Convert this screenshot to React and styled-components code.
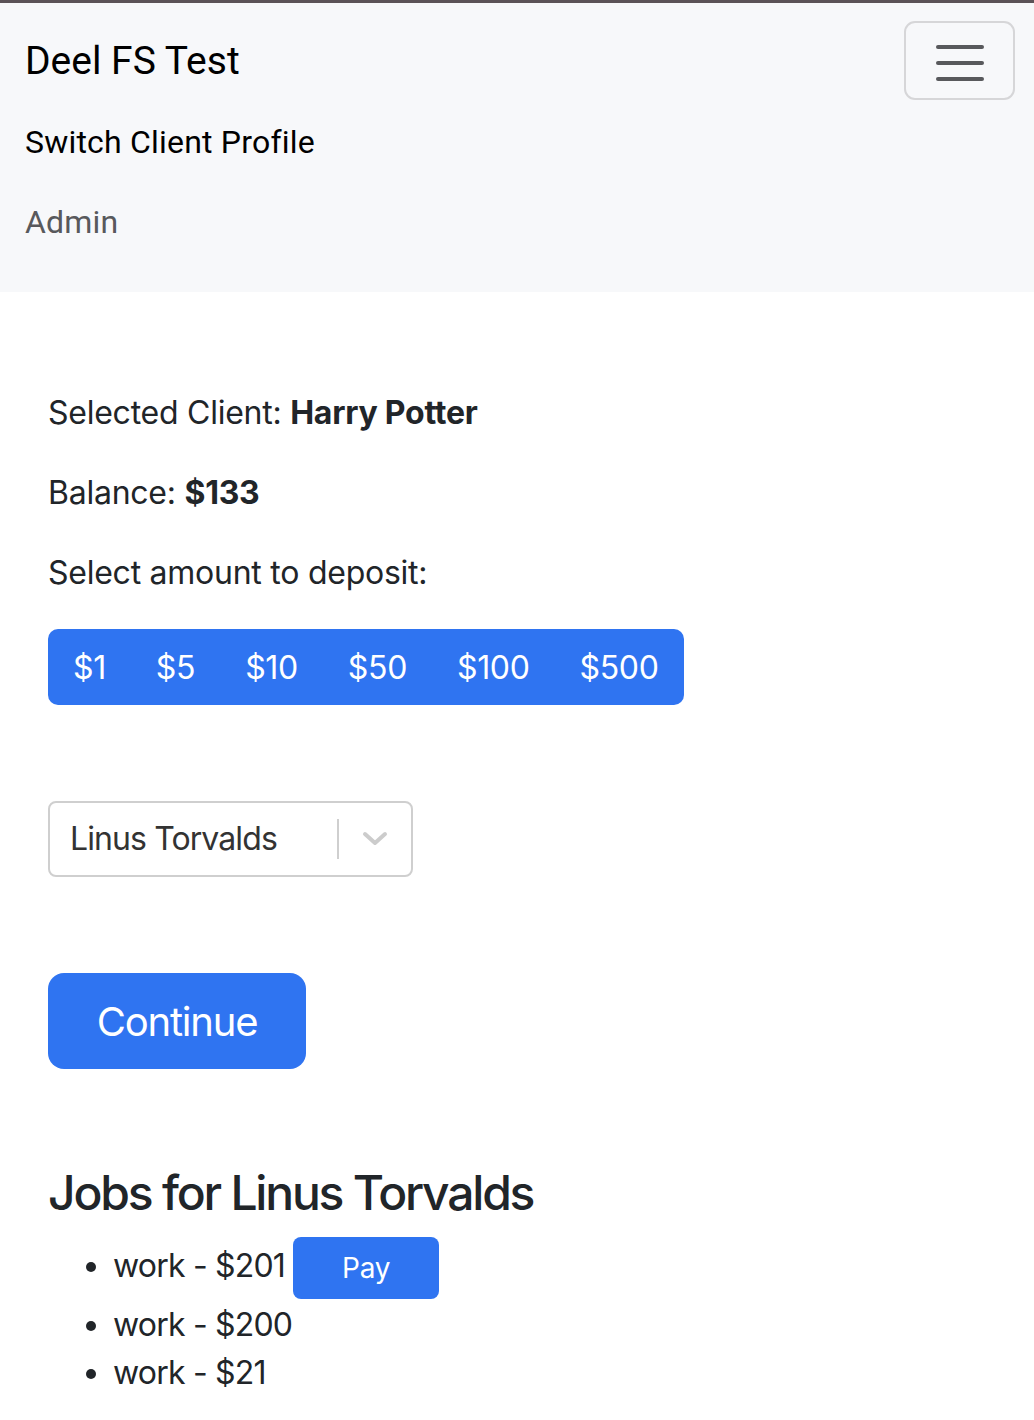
import React from "react";
import styled, { createGlobalStyle } from "styled-components";

const Global = createGlobalStyle`
  html, body { margin: 0; padding: 0; background: #fff; }
  body {
    font-family: Inter, "Noto Sans", sans-serif;
    color: #212529;
    font-size: 32px;
    line-height: 1.5;
  }
  * { box-sizing: border-box; }
`;

const Page = styled.div`
  border-top: 3px solid #5b5257;
  min-height: 1420px;
`;

const Navbar = styled.nav`
  background: #f7f8fa;
  padding: 18px 19px 0 25px;
  height: 289px;
  display: flex;
  flex-direction: column;
`;

const NavTop = styled.div`
  display: flex;
  justify-content: space-between;
  align-items: flex-start;
`;

const Brand = styled.div`
  font-family: Roboto, "Liberation Sans", sans-serif;
  font-size: 39px;
  color: #000;
  padding-top: 16px;
  line-height: 48px;
`;

const Toggler = styled.button`
  width: 111px;
  height: 79px;
  border: 2px solid #d6d6d8;
  border-radius: 11px;
  background: transparent;
  display: flex;
  align-items: center;
  justify-content: center;
  padding: 0;
`;

const NavLink = styled.div`
  font-family: Roboto, "Liberation Sans", sans-serif;
  font-size: 32px;
  line-height: 48px;
  color: ${(p) => (p.$muted ? "#58595c" : "#000")};
  margin-top: ${(p) => p.$mt}px;
  letter-spacing: 0.2px;
`;

const Main = styled.main`
  padding: 97px 48px 0;
`;

const Para = styled.p`
  margin: 0 0 32px;
  line-height: 48px;
  letter-spacing: -0.25px;
  strong { font-weight: 700; }
`;

const Group = styled.div`
  display: inline-flex;
  background: #2f74f1;
  border-radius: 10px;
  overflow: hidden;
`;

const GroupBtn = styled.button`
  font-family: Inter, sans-serif;
  font-size: 32px;
  letter-spacing: -0.35px;
  color: #fff;
  background: transparent;
  border: none;
  padding: 0 25px;
  height: 76px;
`;

const SelectBox = styled.div`
  margin-top: 96px;
  width: 365px;
  height: 76px;
  border: 2px solid #cfcfcf;
  border-radius: 8px;
  display: flex;
  align-items: center;
  padding-left: 20px;
`;

const SelectValue = styled.div`
  flex: 1;
  color: #333;
  font-size: 32px;
  letter-spacing: -0.9px;
`;

const Sep = styled.div`
  width: 2px;
  height: 40px;
  background: #cfcfcf;
`;

const Chevron = styled.div`
  width: 72px;
  display: flex;
  justify-content: center;
  align-items: center;
`;

const Continue = styled.button`
  margin-top: 96px;
  width: 258px;
  height: 96px;
  background: #2f74f1;
  color: #fff;
  font-family: Inter, sans-serif;
  font-size: 40px;
  letter-spacing: -1.2px;
  border: none;
  border-radius: 16px;
  display: block;
`;

const Heading = styled.h4`
  margin: 95px 0 0;
  font-size: 48px;
  font-weight: 500;
  line-height: 58px;
  letter-spacing: -2.2px;
`;

const List = styled.ul`
  margin: 15px 0 0;
  padding-left: 65px;
  letter-spacing: -0.8px;
`;

const Item = styled.li`
  line-height: 48px;
  margin-top: ${(p) => (p.$gap ? p.$gap : 0)}px;
`;

const PayBtn = styled.button`
  font-family: Inter, sans-serif;
  font-size: 28px;
  letter-spacing: -0.3px;
  color: #fff;
  background: #2f74f1;
  border: none;
  border-radius: 8px;
  width: 146px;
  height: 62px;
  margin-left: 8px;
  vertical-align: middle;
`;

export default function App() {
  const amounts = [1, 5, 10, 50, 100, 500];
  return (
    <>
      <Global />
      <Page>
        <Navbar>
          <NavTop>
            <Brand>Deel FS Test</Brand>
            <Toggler aria-label="menu">
              <svg width="48" height="40" viewBox="0 0 48 40">
                <g stroke="#58595c" strokeWidth="4" strokeLinecap="round">
                  <line x1="2" y1="6" x2="46" y2="6" />
                  <line x1="2" y1="22" x2="46" y2="22" />
                  <line x1="2" y1="38" x2="46" y2="38" />
                </g>
              </svg>
            </Toggler>
          </NavTop>
          <NavLink $mt={18}>Switch Client Profile</NavLink>
          <NavLink $muted $mt={32}>Admin</NavLink>
        </Navbar>
        <Main>
          <Para>
            Selected Client: <strong>Harry Potter</strong>
          </Para>
          <Para>
            Balance: <strong>$133</strong>
          </Para>
          <Para>Select amount to deposit:</Para>
          <Group>
            {amounts.map((a) => (
              <GroupBtn key={a}>${a}</GroupBtn>
            ))}
          </Group>
          <SelectBox>
            <SelectValue>Linus Torvalds</SelectValue>
            <Sep />
            <Chevron>
              <svg width="26" height="16" viewBox="0 0 26 16">
                <path d="M3 3 L13 12 L23 3" fill="none" stroke="#cccccc" strokeWidth="4" strokeLinecap="round" strokeLinejoin="round" />
              </svg>
            </Chevron>
          </SelectBox>
          <Continue>Continue</Continue>
          <Heading>Jobs for Linus Torvalds</Heading>
          <List>
            <Item>
              work - $201<PayBtn>Pay</PayBtn>
            </Item>
            <Item $gap={2}>work - $200</Item>
            <Item>work - $21</Item>
          </List>
        </Main>
      </Page>
    </>
  );
}
